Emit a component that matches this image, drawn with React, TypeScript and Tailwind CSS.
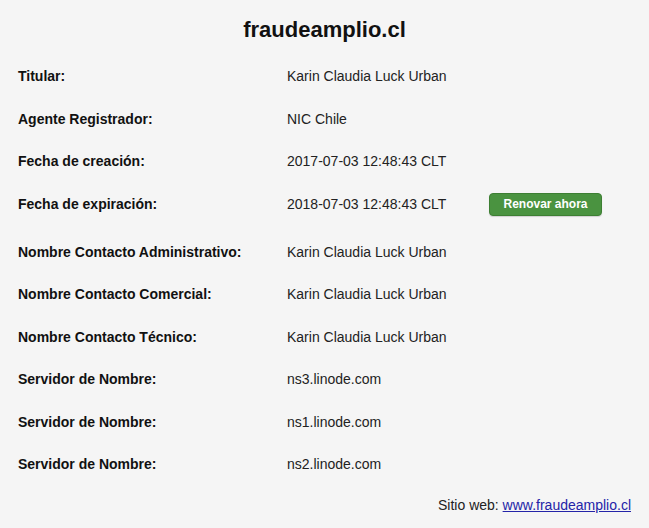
const rows: { label: string; value: string; renew?: boolean }[] = [
  { label: "Titular:", value: "Karin Claudia Luck Urban" },
  { label: "Agente Registrador:", value: "NIC Chile" },
  { label: "Fecha de creación:", value: "2017-07-03 12:48:43 CLT" },
  { label: "Fecha de expiración:", value: "2018-07-03 12:48:43 CLT", renew: true },
  { label: "Nombre Contacto Administrativo:", value: "Karin Claudia Luck Urban" },
  { label: "Nombre Contacto Comercial:", value: "Karin Claudia Luck Urban" },
  { label: "Nombre Contacto Técnico:", value: "Karin Claudia Luck Urban" },
  { label: "Servidor de Nombre:", value: "ns3.linode.com" },
  { label: "Servidor de Nombre:", value: "ns1.linode.com" },
  { label: "Servidor de Nombre:", value: "ns2.linode.com" },
];

export default function App() {
  return (
    <div className="w-[649px] h-[528px] bg-[#f5f5f5] font-['Liberation_Sans',Arial,sans-serif] text-[#1a1a1a] overflow-hidden">
      <h1 className="pt-[17px] h-[55px] text-center text-[22px] leading-[26px] font-bold text-[#111]">
        fraudeamplio.cl
      </h1>
      <div>
        {rows.map((row, i) => (
          <div
            key={i}
            className={`flex items-start pt-[11px] text-[14px] leading-[20px] ${
              row.renew ? "h-[48px]" : "h-[42.5px]"
            }`}
          >
            <div className="w-[287px] pl-[18px] font-bold text-[#111]">{row.label}</div>
            <div className="w-[202px] text-[#222]">{row.value}</div>
            {row.renew && (
              <button className="-mt-[1px] h-[23px] w-[113px] rounded-[4px] border border-[#3d7f33] bg-[#4a9340] text-[12px] leading-[21px] font-bold text-white shadow-[0_1px_1px_rgba(0,0,0,0.15)]">
                Renovar ahora
              </button>
            )}
          </div>
        ))}
      </div>
      <div className="pt-[9px] pr-[18px] text-right text-[14px] leading-[20px] text-[#222]">
        Sitio web:{" "}
        <a href="#" className="text-[#2424a8] underline">
          www.fraudeamplio.cl
        </a>
      </div>
    </div>
  );
}
